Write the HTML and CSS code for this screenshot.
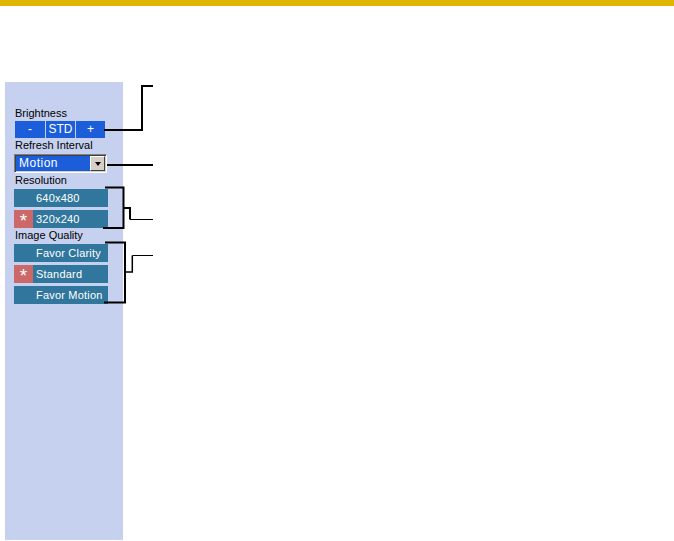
FILE: index.html
```html
<!DOCTYPE html>
<html lang="en">
<head>
  <meta charset="UTF-8" />
  <title>Camera Controls</title>
  <meta name="viewport" content="width=device-width, initial-scale=1.0" />
  <link rel="stylesheet" href="styles.css">
</head>
<body>
  <div class="topbar"></div>

  <div class="panel">
    <div class="label">Brightness</div>
    <div class="bright-row">
      <button class="bright-btn">-</button>
      <button class="bright-btn">STD</button>
      <button class="bright-btn">+</button>
    </div>

    <div class="label">Refresh Interval</div>
    <div class="select">
      <span class="select-text">Motion</span>
      <span class="select-arrow"><span class="tri"></span></span>
    </div>

    <div class="label">Resolution</div>
    <div class="opt-list">
      <div class="opt"><span class="mark"></span>640x480</div>
      <div class="opt"><span class="mark on">*</span>320x240</div>
    </div>

    <div class="label">Image Quality</div>
    <div class="opt-list">
      <div class="opt"><span class="mark"></span>Favor Clarity</div>
      <div class="opt"><span class="mark on">*</span>Standard</div>
      <div class="opt"><span class="mark"></span>Favor Motion</div>
    </div>
  </div>

  <!-- callout lines over the screenshot -->
  <svg class="callouts" width="674" height="541" viewBox="0 0 674 541">
    <g fill="none" stroke="#000" stroke-linejoin="miter">
      <path d="M104 130 H142 V86 H153" stroke-width="2" />
      <path d="M107 165 H153" stroke-width="2" />
      <path d="M105 187.5 H123.5 V228 H103" stroke-width="2" />
      <path d="M123.5 208 H130 V219.5" stroke-width="2" />
      <path d="M130 219.5 H153" stroke-width="1" />
      <path d="M105 242.5 H125 V302.5 H104" stroke-width="2" />
      <path d="M125 272 H132.3 V255.5" stroke-width="1.5" />
      <path d="M132.3 255.5 H153" stroke-width="1" />
    </g>
  </svg>
</body>
</html>
```

FILE: styles.css
```css
body {
  margin: 0;
  font-family: "Liberation Sans", Arial, sans-serif;
  background: #fff;
  position: relative;
  height: 541px;
  overflow: hidden;
}
.topbar {
  height: 6px;
  background: #dfb700;
}
.panel {
  margin: 76px 0 0 5px;
  width: 118px;
  height: 458px;
  box-sizing: border-box;
  padding: 25px 0 0 9px;
  background: #c6d0ef;
}
.label {
  font-size: 11px;
  line-height: 13px;
  padding-left: 1px;
  margin-top: 1px;
  color: #000;
}
.panel .label:first-child {
  margin-top: 0;
}
.bright-row {
  display: flex;
  gap: 1px;
  margin: 1px 0 0 1px;
}
.bright-btn {
  width: 29px;
  height: 17px;
  padding: 0;
  border: 0;
  background: #1c5ed9;
  color: #fff;
  font-family: inherit;
  font-size: 12px;
  line-height: 17px;
}
.bright-btn:first-child {
  width: 30px;
}
.select {
  display: flex;
  align-items: stretch;
  width: 93px;
  height: 19px;
  box-sizing: border-box;
  margin-top: 2px;
  border: 1px solid;
  border-color: #808080 #fff #fff #808080;
  box-shadow: inset 1px 1px 0 #404040, inset -1px -1px 0 #d4d0c8;
  padding: 1px;
  background: #1c5ed9;
}
.select-text {
  flex: 1;
  color: #fff;
  font-size: 12px;
  line-height: 15px;
  padding-left: 3px;
  letter-spacing: 0.5px;
}
.select-arrow {
  width: 15px;
  box-sizing: border-box;
  display: flex;
  align-items: center;
  justify-content: center;
  background: #d4d0c8;
  border: 1px solid;
  border-color: #fff #404040 #404040 #fff;
}
.tri {
  width: 0;
  height: 0;
  border-left: 3.5px solid transparent;
  border-right: 3.5px solid transparent;
  border-top: 4px solid #000;
}
.opt-list {
  display: flex;
  flex-direction: column;
  gap: 3px;
  margin-top: 2px;
}
.opt {
  display: flex;
  width: 94px;
  height: 18px;
  background: #31769d;
  color: #fff;
  font-size: 11px;
  line-height: 18px;
  letter-spacing: 0.2px;
}
.mark {
  width: 19px;
  height: 18px;
  box-sizing: border-box;
  padding-top: 3px;
  margin-right: 3px;
  text-align: center;
  font-size: 19px;
  line-height: 15px;
}
.mark.on {
  background: #cd6868;
}
.callouts {
  position: absolute;
  top: 0;
  left: 0;
  pointer-events: none;
}
```
